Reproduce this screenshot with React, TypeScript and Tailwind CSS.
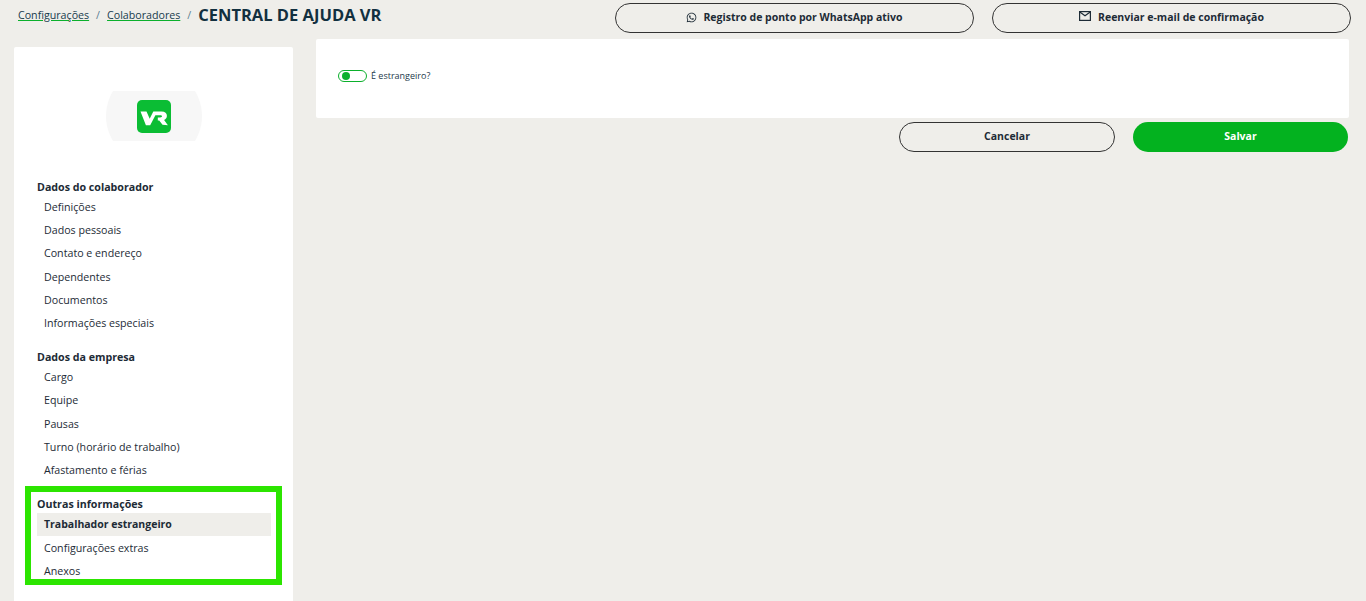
import { FaWhatsapp } from "react-icons/fa";

const font = "font-['Open_Sans',sans-serif]";

const groups = [
  {
    title: "Dados do colaborador",
    items: ["Definições", "Dados pessoais", "Contato e endereço", "Dependentes", "Documentos", "Informações especiais"],
  },
  {
    title: "Dados da empresa",
    items: ["Cargo", "Equipe", "Pausas", "Turno (horário de trabalho)", "Afastamento e férias"],
  },
];

const NavGroup = ({ title, items, active }: { title: string; items: string[]; active?: string }) => {
  return (
    <div>
      <h3 className="text-[10.67px] leading-[16.4px] font-bold text-[#1d2b36]">{title}</h3>
      <ul>
        {items.map((item) => (
          <li
            key={item}
            className={
              item === active
                ? "h-[23.2px] pl-[7px] flex items-center text-[10.5px] font-bold text-[#1d2b36] bg-[#efeeea]"
                : "h-[23.2px] pl-[7px] flex items-center text-[10.67px] text-[#1d2b36]"
            }
          >
            {item}
          </li>
        ))}
      </ul>
    </div>
  );
};

const VrLogo = () => {
  return (
    <div className="mx-auto w-24 h-[50px] overflow-hidden relative">
      <div className="w-24 h-24 rounded-full bg-[#f7f7f7] -mt-[23px]" />
      <svg className="absolute left-[31px] top-[9px]" width="34" height="33" viewBox="0 0 34 33">
        <rect width="34" height="33" rx="5" fill="#0bbd34" />
        <path
          d="M3.5 11.5h6l3.2 7.2 3.6-7.2h8.2c3.6 0 5.4 1.6 5.4 4.3 0 2-1 3.4-2.8 4.1l2.9 4.1.9 1.2-5.4-.4-3.3-4.4h-1.4v-3h2.4c1.2 0 1.8-.4 1.8-1.1s-.6-1.1-1.8-1.1h-4.8l-5.2 10h-4.3z"
          fill="#fff"
        />
      </svg>
    </div>
  );
};

const App = () => {
  return (
    <div className={`${font} h-[601px] overflow-hidden bg-[#efeeea] text-[#1d2b36]`}>
      <div className="flex items-start h-[39px] pl-[18px] pr-[15px]">
        <nav className="flex items-center gap-[7px] h-[30px] text-[10.67px] text-[#173b4d] w-[597px]">
          <a className="underline decoration-[#0bb02c]">Configurações</a>
          <span className="text-[#5d7f92]">/</span>
          <a className="underline decoration-[#0bb02c]">Colaboradores</a>
          <span className="text-[#5d7f92]">/</span>
          <span className="text-[16.5px] font-bold text-[#12303f]">CENTRAL DE AJUDA VR</span>
        </nav>
        <div className="flex gap-[18px] mt-[3px]">
          <button className="w-[359px] h-[30px] pb-[1px] rounded-full border border-[#333] flex items-center justify-center gap-[6px] text-[10.5px] font-bold text-[#1d2b36]">
            <FaWhatsapp className="w-[11px] h-[11px]" />
            Registro de ponto por WhatsApp ativo
          </button>
          <button className="w-[359px] h-[30px] pb-[1px] rounded-full border border-[#333] flex items-center justify-center gap-[7px] text-[10.5px] font-bold text-[#1d2b36]">
            <svg className="-mt-[3px]" width="12" height="10" viewBox="0 0 12 10" fill="none" stroke="#1d2b36" strokeWidth="1.2">
              <rect x="0.6" y="0.6" width="10.8" height="8.8" />
              <path d="M0.8 1l5.2 3.8L11.2 1" />
            </svg>
            Reenviar e-mail de confirmação
          </button>
        </div>
      </div>

      <div className="flex items-start pl-[14px] pr-[17px] gap-[23px]">
        <aside className="w-[279px] h-[560px] mt-[8px] bg-white rounded-[2px] shrink-0">
          <div className="pt-[44px] h-[132px]">
            <VrLogo />
          </div>
          <div className="pl-[23px] pr-[22px] flex flex-col gap-[14.6px]">
            {groups.map((group) => (
              <NavGroup key={group.title} title={group.title} items={group.items} />
            ))}
          </div>
          <div className="ml-[11px] mr-[11px] mt-[5px] border-[6px] border-[#2ce500] pt-[4px] pl-[6px] pr-[5px] h-[99px]">
            <NavGroup
              title="Outras informações"
              items={["Trabalhador estrangeiro", "Configurações extras", "Anexos"]}
              active="Trabalhador estrangeiro"
            />
          </div>
        </aside>

        <main className="flex-1">
          <div className="h-[79px] bg-white rounded-[2px] flex items-center pl-[22px] pb-[6px] gap-[4px] text-[9px] text-[#1d3a4a]">
            <span className="w-[29px] h-[12px] rounded-full border border-[#0bb02c] flex items-center pl-[3px]">
              <span className="w-[8px] h-[8px] rounded-full bg-[#0bb02c]" />
            </span>
            É estrangeiro?
          </div>
          <div className="flex justify-end gap-[18px] mt-[4px] pr-[1px]">
            <button className="w-[216px] h-[30px] pb-[1px] rounded-full border border-[#333] text-[10.5px] font-bold text-[#1d2b36]">
              Cancelar
            </button>
            <button className="w-[215px] h-[30px] pb-[1px] rounded-full bg-[#03b21f] text-[10.5px] font-bold text-white">
              Salvar
            </button>
          </div>
        </main>
      </div>
    </div>
  );
};

export default App;
